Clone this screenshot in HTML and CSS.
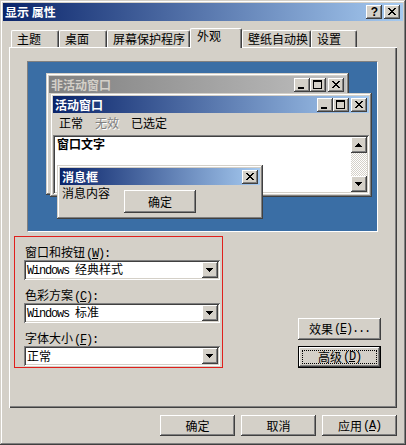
FILE: index.html
```html
<!DOCTYPE html>
<html lang="zh-CN">
<head>
<meta charset="utf-8">
<title>显示 属性</title>
<link rel="stylesheet" href="styles.css">
</head>
<body>
<div class="dialog">
  <div class="titlebar">
    <span class="title-text">显示 属性</span>
    <div class="tb-btns">
      <span class="tbtn raised help">?</span>
      <span class="tbtn raised"><svg class="g" width="16" height="14" viewBox="0 0 16 14"><path d="M4 3h2v1H4z M10 3h2v1h-2z M5 4h2v1H5z M9 4h2v1H9z M6 5h4v1H6z M7 6h2v1H7z M6 7h4v1H6z M5 8h2v1H5z M9 8h2v1H9z M4 9h2v1H4z M10 9h2v1h-2z"/></svg></span>
    </div>
  </div>

  <div class="tabs">
    <div class="tab t1">主题</div>
    <div class="tab t2">桌面</div>
    <div class="tab t3">屏幕保护程序</div>
    <div class="tab t4 sel">外观</div>
    <div class="tab t5">壁纸自动换</div>
    <div class="tab t6">设置</div>
  </div>

  <div class="panel">
    <div class="preview">
      <div class="pwin pwin-inactive">
        <div class="ptitle">
          <span>非活动窗口</span>
          <div class="pbtns">
            <span class="cbtn raised"><svg class="g" width="16" height="14" viewBox="0 0 16 14"><path d="M4 9h6v2H4z"/></svg></span>
            <span class="cbtn raised"><svg class="g" width="16" height="14" viewBox="0 0 16 14"><path fill-rule="evenodd" d="M3 2h9v9H3z M4 4v6h7V4z"/></svg></span>
            <span class="cbtn raised close"><svg class="g" width="16" height="14" viewBox="0 0 16 14"><path d="M4 3h2v1H4z M10 3h2v1h-2z M5 4h2v1H5z M9 4h2v1H9z M6 5h4v1H6z M7 6h2v1H7z M6 7h4v1H6z M5 8h2v1H5z M9 8h2v1H9z M4 9h2v1H4z M10 9h2v1h-2z"/></svg></span>
          </div>
        </div>
      </div>

      <div class="pwin pwin-active">
        <div class="ptitle">
          <span>活动窗口</span>
          <div class="pbtns">
            <span class="cbtn raised"><svg class="g" width="16" height="14" viewBox="0 0 16 14"><path d="M4 9h6v2H4z"/></svg></span>
            <span class="cbtn raised"><svg class="g" width="16" height="14" viewBox="0 0 16 14"><path fill-rule="evenodd" d="M3 2h9v9H3z M4 4v6h7V4z"/></svg></span>
            <span class="cbtn raised close"><svg class="g" width="16" height="14" viewBox="0 0 16 14"><path d="M4 3h2v1H4z M10 3h2v1h-2z M5 4h2v1H5z M9 4h2v1H9z M6 5h4v1H6z M7 6h2v1H7z M6 7h4v1H6z M5 8h2v1H5z M9 8h2v1H9z M4 9h2v1H4z M10 9h2v1h-2z"/></svg></span>
          </div>
        </div>
        <div class="menu">
          <span>正常</span>
          <span class="disabled">无效</span>
          <span>已选定</span>
        </div>
        <div class="textarea">
          <div class="wt">窗口文字</div>
          <div class="vscroll">
            <span class="sb raised"><svg class="g" width="16" height="16" viewBox="0 0 16 16"><path d="M7 6h1v1H7z M6 7h3v1H6z M5 8h5v1H5z M4 9h7v1H4z"/></svg></span>
            <span class="track"></span>
            <span class="sb raised"><svg class="g" width="16" height="16" viewBox="0 0 16 16"><path d="M4 6h7v1H4z M5 7h5v1H5z M6 8h3v1H6z M7 9h1v1H7z"/></svg></span>
          </div>
        </div>
      </div>

      <div class="pwin pwin-msg">
        <div class="ptitle">
          <span>消息框</span>
          <div class="pbtns">
            <span class="cbtn raised"><svg class="g" width="16" height="14" viewBox="0 0 16 14"><path d="M4 3h2v1H4z M10 3h2v1h-2z M5 4h2v1H5z M9 4h2v1H9z M6 5h4v1H6z M7 6h2v1H7z M6 7h4v1H6z M5 8h2v1H5z M9 8h2v1H9z M4 9h2v1H4z M10 9h2v1h-2z"/></svg></span>
          </div>
        </div>
        <div class="msgbody">
          <span class="msgtext">消息内容</span>
          <span class="btn raised msg-ok">确定</span>
        </div>
      </div>
    </div>

    <div class="settings">
      <div class="redbox">
        <div class="group">
          <div class="flabel">窗口和按钮<span class="lat">(<u>W</u>):</span></div>
          <div class="combo">
            <span class="combo-text"><span class="lat">Windows </span>经典样式</span>
            <span class="dd raised"><svg class="g" width="16" height="16" viewBox="0 0 16 16"><path d="M4 6h7v1H4z M5 7h5v1H5z M6 8h3v1H6z M7 9h1v1H7z"/></svg></span>
          </div>
        </div>
        <div class="group">
          <div class="flabel">色彩方案<span class="lat">(<u>C</u>):</span></div>
          <div class="combo">
            <span class="combo-text"><span class="lat">Windows </span>标准</span>
            <span class="dd raised"><svg class="g" width="16" height="16" viewBox="0 0 16 16"><path d="M4 6h7v1H4z M5 7h5v1H5z M6 8h3v1H6z M7 9h1v1H7z"/></svg></span>
          </div>
        </div>
        <div class="group">
          <div class="flabel">字体大小<span class="lat">(<u>F</u>):</span></div>
          <div class="combo">
            <span class="combo-text">正常</span>
            <span class="dd raised"><svg class="g" width="16" height="16" viewBox="0 0 16 16"><path d="M4 6h7v1H4z M5 7h5v1H5z M6 8h3v1H6z M7 9h1v1H7z"/></svg></span>
          </div>
        </div>
      </div>
      <div class="side-btns">
        <span class="btn raised side">效果<span class="lat">(<u>E</u>)...</span></span>
        <span class="btn side default">高级<span class="lat">(<u>D</u>)</span></span>
      </div>
    </div>
  </div>

  <div class="footer">
    <span class="btn raised foot">确定</span>
    <span class="btn raised foot">取消</span>
    <span class="btn raised foot">应用<span class="lat">(<u>A</u>)</span></span>
  </div>
</div>
</body>
</html>
```

FILE: styles.css
```css
* { box-sizing: border-box; margin: 0; padding: 0; }
html, body { width: 406px; height: 445px; overflow: hidden; }
body {
  font-family: "Noto Sans CJK SC", "Noto Sans", sans-serif;
  font-size: 12px;
  line-height: 14px;
  color: #000;
  background: #D4D0C8;
}

.raised {
  background: #D4D0C8;
  box-shadow: inset -1px -1px #404040, inset 1px 1px #fff, inset -2px -2px #808080, inset 2px 2px #D4D0C8;
}
.g { display: block; shape-rendering: crispEdges; fill: #000; }

.lat {
  font-family: "Liberation Mono", "DejaVu Sans Mono", monospace;
  letter-spacing: -1.2px;
  white-space: pre;
  padding-left: 1px;
}

.dialog {
  width: 406px;
  height: 445px;
  padding: 3px;
  background: #D4D0C8;
  box-shadow: inset -1px -1px #404040, inset 1px 1px #D4D0C8, inset -2px -2px #808080, inset 2px 2px #fff;
  display: flex;
  flex-direction: column;
}

.titlebar {
  height: 18px;
  flex: none;
  display: flex;
  align-items: center;
  justify-content: space-between;
  padding: 0 3px 0 2px;
  background: linear-gradient(to right, #0A246A, #A6CAF0);
}
.title-text { color: #fff; font-weight: bold; }
.tb-btns { display: flex; gap: 2px; }
.tbtn {
  width: 16px;
  height: 14px;
  display: flex;
  align-items: center;
  justify-content: center;
}
.help {
  font-family: "Liberation Sans", sans-serif;
  font-weight: bold;
  font-size: 12px;
  line-height: 14px;
  padding-left: 1px;
}

.tabs {
  display: flex;
  align-items: flex-end;
  height: 20px;
  flex: none;
  margin: 7px 0 -1px 8px;
  position: relative;
  z-index: 1;
}
.tab {
  height: 17px;
  margin-bottom: 1px;
  padding: 1px 0 0 5px;
  border: 1px solid #fff;
  border-bottom: 0;
  border-right-color: #404040;
  border-radius: 2px 2px 0 0;
  box-shadow: inset -1px 0 #808080;
  background: #D4D0C8;
  white-space: nowrap;
  line-height: 14px;
}
.t1 { width: 48px; }
.t2 { width: 48px; }
.t3 { width: 83px; }
.t4 { width: 52px; }
.t5 { width: 69px; }
.t6 { width: 46px; }
.tab.sel {
  height: 20px;
  margin-bottom: 0;
  padding-top: 0;
  padding-left: 6px;
}

.panel {
  height: 361px;
  flex: none;
  margin: 0 6px;
  box-shadow: inset 1px 1px #fff, inset -1px -1px #404040, inset -2px -2px #808080;
  display: flex;
  flex-direction: column;
}

.preview {
  position: relative;
  width: 351px;
  height: 171px;
  margin: 14px 0 0 18px;
  background: #3A6EA5;
  border: 1px solid;
  border-color: #808080 #fff #fff #808080;
}

.pwin {
  position: absolute;
  background: #D4D0C8;
  padding: 3px;
  box-shadow: inset -1px -1px #404040, inset 1px 1px #D4D0C8, inset -2px -2px #808080, inset 2px 2px #fff;
  display: flex;
  flex-direction: column;
}
.pwin-inactive { left: 18px; top: 11px; width: 303px; height: 122px; }
.pwin-active { left: 22px; top: 31px; width: 322px; height: 104px; }
.pwin-msg { left: 29px; top: 103px; width: 206px; height: 54px; }

.ptitle {
  height: 17px;
  flex: none;
  display: flex;
  align-items: center;
  justify-content: space-between;
  padding: 0 2px;
  font-weight: bold;
  color: #fff;
  background: linear-gradient(to right, #0A246A, #A6CAF0);
}
.pwin-inactive .ptitle {
  color: #D4D0C8;
  background: linear-gradient(to right, #808080, #C0C0C0);
}
.pbtns { display: flex; }
.cbtn { width: 16px; height: 14px; display: block; }
.pbtns .close { margin-left: 2px; }

.menu {
  display: flex;
  height: 22px;
  flex: none;
  line-height: 20px;
}
.menu span { padding: 0 6px; }
.menu .disabled { color: #808080; text-shadow: 1px 1px 0 #fff; }

.textarea {
  flex: 1;
  display: flex;
  padding: 2px;
  background: #fff;
  box-shadow: inset 1px 1px #808080, inset -1px -1px #fff, inset 2px 2px #404040, inset -2px -2px #D4D0C8;
}
.wt { flex: 1; font-weight: bold; padding: 0 0 0 2px; line-height: 14px; }
.vscroll { width: 16px; display: flex; flex-direction: column; }
.sb { width: 16px; height: 16px; display: block; flex: none; }
.track {
  flex: 1;
  background: repeating-conic-gradient(#fff 0 25%, #D4D0C8 0 50%) 0 0 / 2px 2px;
}

.msgbody { display: flex; align-items: flex-start; }
.msgtext { padding-left: 2px; margin-top: 1px; }

.btn {
  display: flex;
  align-items: center;
  justify-content: center;
  white-space: nowrap;
  line-height: 14px;
}
.msg-ok { width: 72px; height: 23px; margin: 5px 0 0 14px; }

.settings {
  display: flex;
  align-items: flex-end;
  margin: 4px 16px 0 5px;
}
.redbox {
  width: 209px;
  border: 1px solid #E0201C;
  padding: 8px 2px 1px 9px;
  display: flex;
  flex-direction: column;
  gap: 8px;
}
.group { display: flex; flex-direction: column; gap: 1px; }
.flabel { height: 14px; line-height: 14px; padding-left: 1px; }
.combo {
  height: 20px;
  display: flex;
  align-items: center;
  padding: 2px;
  background: #fff;
  box-shadow: inset 1px 1px #808080, inset -1px -1px #fff, inset 2px 2px #404040, inset -2px -2px #D4D0C8;
}
.combo-text { flex: 1; padding-left: 1px; line-height: 16px; white-space: nowrap; }
.combo-text .lat { padding-left: 0; }
.dd { width: 16px; height: 16px; display: block; flex: none; }

.side-btns {
  margin-left: auto;
  display: flex;
  flex-direction: column;
  gap: 6px;
}
.side { width: 83px; height: 22px; }
.default {
  position: relative;
  background: #D4D0C8;
  box-shadow: inset 0 0 0 1px #000, inset -2px -2px #404040, inset 2px 2px #fff, inset -3px -3px #808080, inset 3px 3px #D4D0C8;
}
.default::after {
  content: "";
  position: absolute;
  inset: 4px;
  border: 1px dotted #000;
}

.footer {
  display: flex;
  justify-content: flex-end;
  gap: 6px;
  margin: 7px 6px 0 0;
}
.foot { width: 75px; height: 21px; }
```
